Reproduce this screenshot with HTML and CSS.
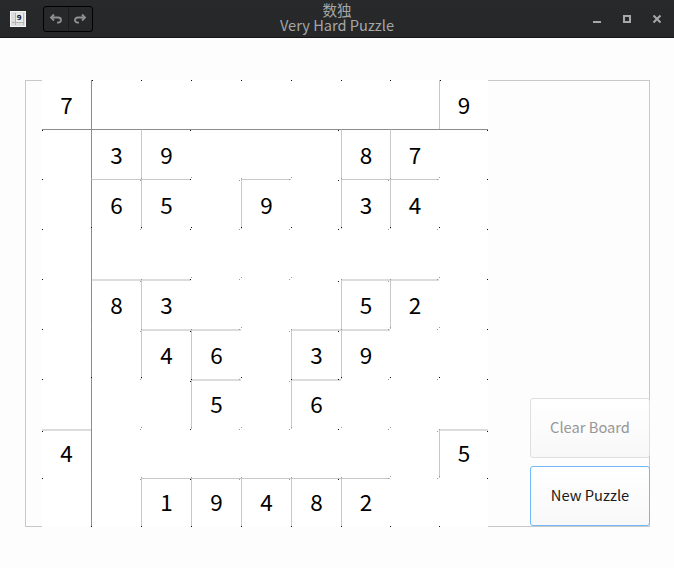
FILE: index.html
```html
<!DOCTYPE html>
<html lang="en">
<head>
<meta charset="utf-8">
<title>数独</title>
<link rel="stylesheet" href="styles.css">
</head>
<body>
<header class="titlebar">
  <div class="bar-left">
    <svg class="app-icon" width="16" height="16" viewBox="0 0 16 16"><rect width="16" height="16" fill="#f6f6f6"/><rect x="1" y="1" width="14" height="14" fill="#dedede"/><path d="M2 11.500H14M5.500 2V14" stroke="#b4b4b4" fill="none"/><rect x="6" y="2" width="7" height="9" fill="#ececec"/><path d="M13.500 2V14" stroke="#bbb"/><text class="icon-digit" x="6.800" y="9">9</text></svg>
    <div class="history">
      <button class="hist" aria-label="Undo"><svg width="14" height="12" viewBox="0 0 14 12"><path d="M5 1.500L2 4.500L5 7.500M2.500 4.500H9Q12 4.500 12 7T9 9.700H8"/></svg></button>
      <button class="hist" aria-label="Redo"><svg width="14" height="12" viewBox="0 0 14 12"><path d="M9 1.500L12 4.500L9 7.500M11.500 4.500H5Q2 4.500 2 7T5 9.700H6"/></svg></button>
    </div>
  </div>
  <div class="titles"><div>数独</div><div>Very Hard Puzzle</div></div>
  <div class="controls">
    <svg width="10" height="10" viewBox="0 0 10 10"><path d="M1 8H9"/></svg>
    <svg width="10" height="10" viewBox="0 0 10 10"><path d="M2 2H8V8H2Z"/></svg>
    <svg width="10" height="10" viewBox="0 0 10 10"><path d="M1.500 1.500L8.500 8.500M8.500 1.500L1.500 8.500"/></svg>
  </div>
</header>
<main class="frame">
  <div class="board" id="board"></div>
  <aside class="actions">
    <button class="action disabled">Clear Board</button>
    <button class="action focused">New Puzzle</button>
  </aside>
</main>
<script src="board.js"></script>
</body>
</html>
```
FILE: styles.css
```css
* { box-sizing: border-box; }
body {
  margin: 0;
  height: 568px;
  overflow: hidden;
  background: #fdfdfd;
  font-family: "Noto Sans CJK SC", "Noto Sans", sans-serif;
}
button { font: inherit; padding: 0; margin: 0; }
.titlebar {
  height: 38px;
  display: grid;
  grid-template-columns: 1fr auto 1fr;
  align-items: center;
  background: linear-gradient(#27292a, #252728);
  border-bottom: 1px solid #151617;
  color: #a6a6a6;
}
.bar-left { display: flex; align-items: center; gap: 17px; padding-left: 10px; }
.app-icon { display: block; }
.icon-digit { font: 700 7px "DejaVu Sans", sans-serif; fill: #222; }
.history {
  display: flex;
  width: 50px;
  height: 26px;
  border: 1px solid #000;
  border-radius: 3px;
}
.hist {
  flex: 1;
  border: 0;
  background: none;
  display: flex;
  align-items: center;
  justify-content: center;
}
.hist + .hist { border-left: 1px solid #1b1c1d; }
.hist svg, .controls svg { fill: none; stroke: #8f8f8f; stroke-width: 1.800; }
.titles { text-align: center; font-size: 14.600px; line-height: 15px; padding-bottom: 3px; }
.controls { display: flex; justify-content: flex-end; gap: 20px; padding-right: 12px; }
.controls svg { stroke: #a8a8a8; stroke-width: 2; }
.frame {
  margin: 42px 24px 0 25px;
  height: 447px;
  display: flex;
  justify-content: space-between;
  box-shadow: inset 0 0 0 1px #c8c8c8;
}
.board {
  margin-left: 17px;
  width: 446px;
  background: #fff;
  display: grid;
  grid-template-columns: 49px repeat(5, 50px) repeat(3, 49px);
  grid-template-rows: 49px repeat(6, 50px) 49px 49px;
}
.cell {
  display: flex;
  align-items: center;
  justify-content: center;
  position: relative;
  padding-bottom: 2px;
  font-size: 22.500px;
  line-height: 30px;
  color: #000;
  border: 0 solid #c8c8c8;
}
.low { padding-bottom: 5px; }
.left { border-left-width: 1px; }
.top { border-top-width: 1px; }
.soft { border-top: 2px solid #dcdcdc; }
.main-left { border-left: 1px solid #8c8c8c; }
.main-top { border-top: 1px solid #8c8c8c; }
.dot {
  position: absolute;
  width: 1px;
  height: 1px;
  background: #111;
}
.dot.faint { background: #999; }
.dot.nw { left: 0; top: 0; }
.dot.ne { right: 0; top: 0; }
.dot.sw { left: 0; bottom: 0; }
.dot.above { left: 0; top: -2px; }
.dot.beside { left: -2px; top: 0; }
.dot.near { left: -1px; top: 0; }
.dot.far { left: -3px; top: 0; }
.left > .dot.above, .left > .dot.sw,
.main-left > .dot.above, .main-left > .dot.sw { left: -1px; }
.left > .dot.beside { left: -3px; }
.left > .dot.near { left: -2px; }
.left > .dot.far { left: -4px; }
.actions {
  width: 120px;
  display: flex;
  flex-direction: column;
  justify-content: flex-end;
  gap: 8px;
  padding-bottom: 1px;
}
.action {
  height: 60px;
  padding-bottom: 3px;
  font-size: 14.700px;
  border: 1px solid #dfdfdf;
  border-radius: 3px;
  background: linear-gradient(#fff, #f8f8f8);
}
.disabled { color: #979797; }
.focused { color: #1a1a1a; border-color: #73b9f7; }
```
FILE: board.js
```js
const rows = [
  "7.......9",
  ".39...87.",
  ".65.9.34.",
  ".........",
  ".83...52.",
  "..46.39..",
  "...5.6...",
  "4.......5",
  "..19482.."
];
const board = document.getElementById("board");
rows.forEach((row, r) => [...row].forEach((digit, c) => {
  const cell = document.createElement("div");
  const filled = digit !== ".";
  const names = ["cell"];
  if (r > 5) names.push("low");
  if (c === 1) names.push("main-left");
  else if (filled && c > 0) names.push("left");
  if (r === 1) names.push("main-top");
  else if (filled && r > 0) names.push(r > 3 && r < 8 ? "soft" : "top");
  cell.className = names.join(" ");
  if (filled) cell.textContent = digit;

  const dots = [];
  if (r === 0) {
    if (c > 0) dots.push("nw");
  } else {
    if (c === 0) dots.push("nw");
    if (c === 8) dots.push("ne");
    if (c === 3) dots.push("near");
    if (c === 6) dots.push("far");
    if (r > 1) {
      const shade = r === 3 || r === 6 ? "" : " faint";
      if (c > 0) dots.push("above" + shade);
      if (c === 2) dots.push("near faint");
      if ([4, 5, 7, 8].includes(c)) dots.push("beside faint");
    }
  }
  if (r === 8 && c > 0) dots.push("sw");
  dots.forEach(d => {
    const dot = document.createElement("span");
    dot.className = "dot " + d;
    cell.append(dot);
  });
  board.append(cell);
}));
```
